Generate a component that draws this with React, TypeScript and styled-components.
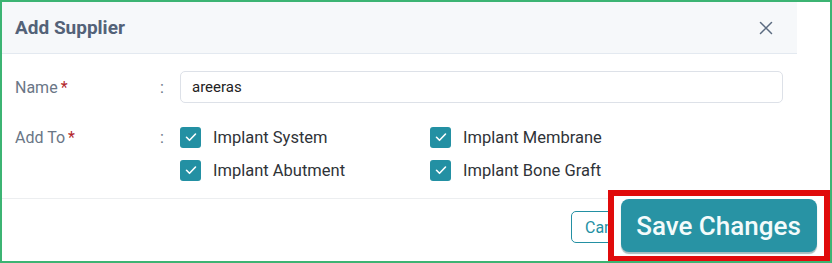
import React from 'react';
import styled, { createGlobalStyle } from 'styled-components';

const GlobalStyle = createGlobalStyle`
  * { box-sizing: border-box; }
  body {
    margin: 0;
    font-family: Roboto, "Liberation Sans", sans-serif;
    background: #ffffff;
  }
`;

const Frame = styled.div`
  width: 832px;
  height: 263px;
  border: 2px solid #3cb473;
  overflow: hidden;
  background: #ffffff;
`;

const Modal = styled.div`
  width: 795px;
  display: flex;
  flex-direction: column;
`;

const Header = styled.div`
  height: 52px;
  display: flex;
  align-items: center;
  justify-content: space-between;
  padding: 0 24px 0 13px;
  background: #f6f8fa;
  border-bottom: 1px solid #e3e9f0;
`;

const Title = styled.h2`
  margin: 0;
  font-size: 19px;
  font-weight: 700;
  color: #536278;
`;

const CloseButton = styled.button`
  border: none;
  background: none;
  padding: 0;
  display: flex;
  cursor: pointer;
`;

const Body = styled.div`
  padding: 17px 14px 17px 13px;
  display: flex;
  flex-direction: column;
  gap: 23px;
`;

const Row = styled.div<{ $align?: string }>`
  display: grid;
  grid-template-columns: 145px 20px 1fr;
  align-items: ${(p) => p.$align || 'center'};
`;

const Label = styled.label<{ $offset?: number }>`
  font-size: 16px;
  color: #6a7686;
  display: flex;
  gap: 3px;
  margin-top: ${(p) => p.$offset || 0}px;
`;

const Required = styled.span`
  color: #b3262b;
`;

const Colon = styled.span<{ $offset?: number }>`
  font-size: 16px;
  color: #6a7686;
  margin-top: ${(p) => p.$offset || 0}px;
`;

const Input = styled.input`
  height: 32px;
  width: 100%;
  border: 1px solid #dde1e8;
  border-radius: 5px;
  padding: 0 11px;
  font-family: inherit;
  font-size: 15px;
  color: #222;
  outline: none;
`;

const CheckGrid = styled.div`
  display: grid;
  grid-template-columns: 250px 250px;
  row-gap: 11px;
`;

const CheckItem = styled.label`
  display: flex;
  align-items: center;
  gap: 12px;
  font-size: 16.5px;
  color: #2f3338;
  height: 22px;
`;

const Box = styled.span`
  width: 21px;
  height: 21px;
  border-radius: 3px;
  background: #2390a3;
  display: flex;
  align-items: center;
  justify-content: center;
`;

const Footer = styled.div`
  border-top: 1px solid #eceef0;
  height: 64px;
  display: flex;
  align-items: flex-start;
  justify-content: flex-end;
  padding-top: 12px;
  position: relative;
`;

const CancelButton = styled.button`
  height: 32px;
  width: 86px;
  margin-right: 140px;
  border: 1px solid #2390a3;
  border-radius: 5px;
  background: #fff;
  color: #2390a3;
  font-family: inherit;
  font-size: 16px;
  text-align: left;
  padding-left: 13px;
`;

const Highlight = styled.div`
  position: absolute;
  left: 606px;
  top: -9px;
  width: 222px;
  height: 72px;
  border: 6px solid #e00b0b;
  background: #fff;
  display: flex;
  align-items: center;
  justify-content: center;
  padding: 0 1px 1px 0;
`;

const SaveButton = styled.button`
  width: 196px;
  height: 53px;
  border: none;
  border-radius: 8px;
  background: #2893a4;
  box-shadow: 0 2px 1px rgba(0, 60, 70, 0.35);
  color: #f4fbfb;
  font-family: inherit;
  font-size: 26px;
  font-weight: 500;
`;

const Check = () => (
  <svg width="14" height="14" viewBox="0 0 14 14" fill="none">
    <path d="M2.5 7.3l3 3 6-6.3" stroke="#fff" strokeWidth="1.6" strokeLinecap="round" strokeLinejoin="round" />
  </svg>
);

const items = ['Implant System', 'Implant Membrane', 'Implant Abutment', 'Implant Bone Graft'];

export default function App() {
  return (
    <>
      <GlobalStyle />
      <Frame>
        <Modal>
          <Header>
            <Title>Add Supplier</Title>
            <CloseButton aria-label="close">
              <svg width="14" height="14" viewBox="0 0 14 14">
                <path d="M1.5 1.5l11 11M12.5 1.5l-11 11" stroke="#5b6b80" strokeWidth="1.5" strokeLinecap="round" />
              </svg>
            </CloseButton>
          </Header>
          <Body>
            <Row>
              <Label>
                Name<Required>*</Required>
              </Label>
              <Colon>:</Colon>
              <Input defaultValue="areeras" />
            </Row>
            <Row $align="start">
              <Label $offset={2}>
                Add To<Required>*</Required>
              </Label>
              <Colon $offset={2}>:</Colon>
              <CheckGrid>
                {items.map((it) => (
                  <CheckItem key={it}>
                    <Box>
                      <Check />
                    </Box>
                    {it}
                  </CheckItem>
                ))}
              </CheckGrid>
            </Row>
          </Body>
          <Footer>
            <CancelButton>Cancel</CancelButton>
            <Highlight>
              <SaveButton>Save Changes</SaveButton>
            </Highlight>
          </Footer>
        </Modal>
      </Frame>
    </>
  );
}
